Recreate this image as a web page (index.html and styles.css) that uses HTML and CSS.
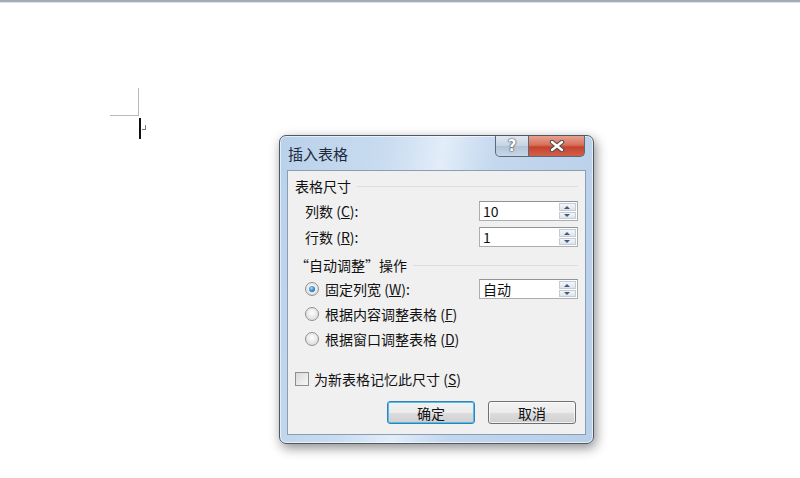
FILE: index.html
```html
<!DOCTYPE html>
<html>
<head>
    <title>插入表格</title>
    <link rel="stylesheet" href="styles.css">
</head>
<body>
    <div class="topbar"></div>
    <div class="page">
        <div class="margin-mark"></div>
        <div class="caret"><span class="caret-bar"></span><span class="caret-ret"></span></div>

        <div class="dialog">
            <div class="titlebar">
                <span class="title">插入表格</span>
                <div class="caption-buttons">
                    <span class="cap-btn help">?</span>
                    <span class="cap-btn close">
                        <svg width="16" height="12" viewBox="0 0 16 12">
                            <path d="M3 2 L13 10 M13 2 L3 10" stroke="#4a4a4a" stroke-width="4.4" stroke-linecap="round"/>
                            <path d="M3 2 L13 10 M13 2 L3 10" stroke="#fff" stroke-width="2.4" stroke-linecap="round"/>
                        </svg>
                    </span>
                </div>
            </div>

            <div class="client">
                <div class="group-head"><span>表格尺寸</span><i></i></div>

                <div class="field-row first">
                    <label>列数 (<u>C</u>):</label>
                    <div class="spin"><span class="spin-text">10</span><span class="spin-btns"><b class="up"></b><b class="down"></b></span></div>
                </div>
                <div class="field-row">
                    <label>行数 (<u>R</u>):</label>
                    <div class="spin"><span class="spin-text">1</span><span class="spin-btns"><b class="up"></b><b class="down"></b></span></div>
                </div>

                <div class="group-head second"><span>“自动调整”操作</span><i></i></div>

                <div class="radio-row first">
                    <span class="radio checked"></span>
                    <label>固定列宽 (<u>W</u>):</label>
                    <div class="spin wide"><span class="spin-text">自动</span><span class="spin-btns"><b class="up"></b><b class="down"></b></span></div>
                </div>
                <div class="radio-row">
                    <span class="radio"></span>
                    <label>根据内容调整表格 (<u>F</u>)</label>
                </div>
                <div class="radio-row">
                    <span class="radio"></span>
                    <label>根据窗口调整表格 (<u>D</u>)</label>
                </div>

                <div class="check-row">
                    <span class="checkbox"></span>
                    <label>为新表格记忆此尺寸 (<u>S</u>)</label>
                </div>

                <div class="actions">
                    <button class="btn default">确定</button>
                    <button class="btn">取消</button>
                </div>
            </div>
        </div>
    </div>
</body>
</html>
```

FILE: styles.css
```css
* {
    box-sizing: border-box;
}

body {
    margin: 0;
    background-color: #fff;
    font-family: "Noto Sans CJK SC", "Liberation Sans", sans-serif;
    font-size: 14px;
    color: #111;
}

.topbar {
    height: 3px;
    background-color: #a3acb8;
    border-bottom: 1px solid #dde2e8;
}

.page {
    position: relative;
    height: 475px;
}

/* document margin corner + text caret */
.margin-mark {
    position: absolute;
    left: 110px;
    top: 85px;
    width: 29px;
    height: 28px;
    border-right: 1px solid #b8b8b8;
    border-bottom: 1px solid #b8b8b8;
}

.caret {
    position: absolute;
    left: 139px;
    top: 115px;
    height: 21px;
    width: 10px;
}

.caret-bar {
    position: absolute;
    left: 0;
    top: 0;
    width: 2px;
    height: 21px;
    background-color: #111;
}

.caret-ret {
    position: absolute;
    left: 3px;
    top: 7px;
    width: 4px;
    height: 5px;
    border-right: 1px solid #777;
    border-bottom: 1px solid #777;
}

/* dialog window */
.dialog {
    position: absolute;
    left: 279px;
    top: 132px;
    width: 315px;
    height: 309px;
    border: 1px solid #4f5966;
    border-radius: 7px;
    background: linear-gradient(100deg, #b9d1ea 0%, #c9dcf0 30%, #e2edf8 45%, #c3d7ee 60%, #b8cfe8 100%);
    box-shadow: 2px 4px 12px rgba(0, 0, 0, 0.45), inset 0 0 0 1px rgba(255, 255, 255, 0.6);
    padding: 0 7px 8px 7px;
    display: flex;
    flex-direction: column;
}

.titlebar {
    height: 34px;
    flex-shrink: 0;
    display: flex;
    justify-content: space-between;
    align-items: flex-start;
}

.title {
    margin-top: 7px;
    margin-left: 1px;
    font-size: 15px;
    color: #1e2a3a;
}

.caption-buttons {
    display: flex;
    margin-right: 1px;
}

.cap-btn {
    height: 21px;
    display: flex;
    align-items: center;
    justify-content: center;
    border: 1px solid #5c6878;
    border-top: none;
}

.help {
    width: 34px;
    border-radius: 0 0 0 5px;
    background: linear-gradient(#dfe8f2, #c5d3e2 50%, #b3c4d8 51%, #c8d6e6);
    color: #fff;
    font-family: "DejaVu Sans", sans-serif;
    font-weight: bold;
    font-size: 15px;
    text-shadow: 0 0 2px #333, 0 0 1px #333;
}

.close {
    width: 56px;
    border-left: none;
    border-radius: 0 0 5px 0;
    background: linear-gradient(#e8a190, #d6705c 45%, #c4432c 55%, #d2604a);
}

.client {
    flex: 1;
    background-color: #f0f0f0;
    border: 1px solid #8b9db3;
    padding: 7px 7px 0 7px;
    display: flex;
    flex-direction: column;
}

.group-head {
    display: flex;
    align-items: center;
    height: 16px;
}

.group-head i {
    flex: 1;
    margin-left: 6px;
    border-top: 1px solid #d5dfe5;
}

.group-head.second {
    margin-top: 10px;
}

label u {
    text-decoration: underline;
}

.field-row {
    display: flex;
    align-items: center;
    justify-content: space-between;
    height: 20px;
    margin-top: 6px;
    padding-left: 10px;
}

.field-row.first {
    margin-top: 7px;
}

.spin {
    width: 99px;
    height: 20px;
    border: 1px solid #abadb3;
    border-top-color: #8f9399;
    background-color: #fff;
    display: flex;
    justify-content: space-between;
}

.spin.wide {
    margin-left: auto;
}

.spin-text {
    padding-left: 3px;
    line-height: 18px;
}

.spin-btns {
    width: 19px;
    display: flex;
    flex-direction: column;
    padding: 1px;
    gap: 1px;
}

.spin-btns b {
    flex: 1;
    border: 1px solid #c4cbd4;
    background: linear-gradient(#f4f6f8, #dfe4ea);
    position: relative;
}

.spin-btns b::after {
    content: "";
    position: absolute;
    left: 4px;
    top: 2px;
    border-left: 3px solid transparent;
    border-right: 3px solid transparent;
}

.spin-btns .up::after {
    border-bottom: 3px solid #3d5a80;
}

.spin-btns .down::after {
    top: 1px;
    border-top: 3px solid #3d5a80;
}

.radio-row {
    display: flex;
    align-items: center;
    height: 20px;
    margin-top: 5px;
    padding-left: 10px;
}

.radio-row.first {
    margin-top: 6px;
}

.radio {
    width: 14px;
    height: 14px;
    border-radius: 50%;
    border: 1px solid #8e8f8f;
    background: radial-gradient(circle at 50% 40%, #fefefe, #d4d4d4);
    margin-right: 6px;
    position: relative;
}

.radio.checked::after {
    content: "";
    position: absolute;
    left: 3px;
    top: 3px;
    width: 6px;
    height: 6px;
    border-radius: 50%;
    background: radial-gradient(circle at 40% 35%, #9fd6ff, #1f6fbf 70%);
}

.check-row {
    display: flex;
    align-items: center;
    height: 20px;
    margin-top: 20px;
}

.checkbox {
    width: 14px;
    height: 14px;
    border: 1px solid #8e8f8f;
    background: linear-gradient(135deg, #d9d9d9, #f7f7f7);
    margin-right: 5px;
}

.actions {
    display: flex;
    justify-content: flex-end;
    gap: 13px;
    margin-top: 12px;
    padding-right: 2px;
}

.btn {
    width: 88px;
    height: 23px;
    font-family: inherit;
    font-size: 14px;
    color: #111;
    border: 1px solid #707070;
    border-radius: 3px;
    background: linear-gradient(#f2f2f2 0%, #ebebeb 50%, #dddddd 51%, #cfcfcf 100%);
    box-shadow: inset 0 0 0 1px rgba(255, 255, 255, 0.7);
    padding: 0;
}

.btn.default {
    border-color: #3c7fb1;
    box-shadow: inset 0 0 0 1px #48c0f0;
}
```
